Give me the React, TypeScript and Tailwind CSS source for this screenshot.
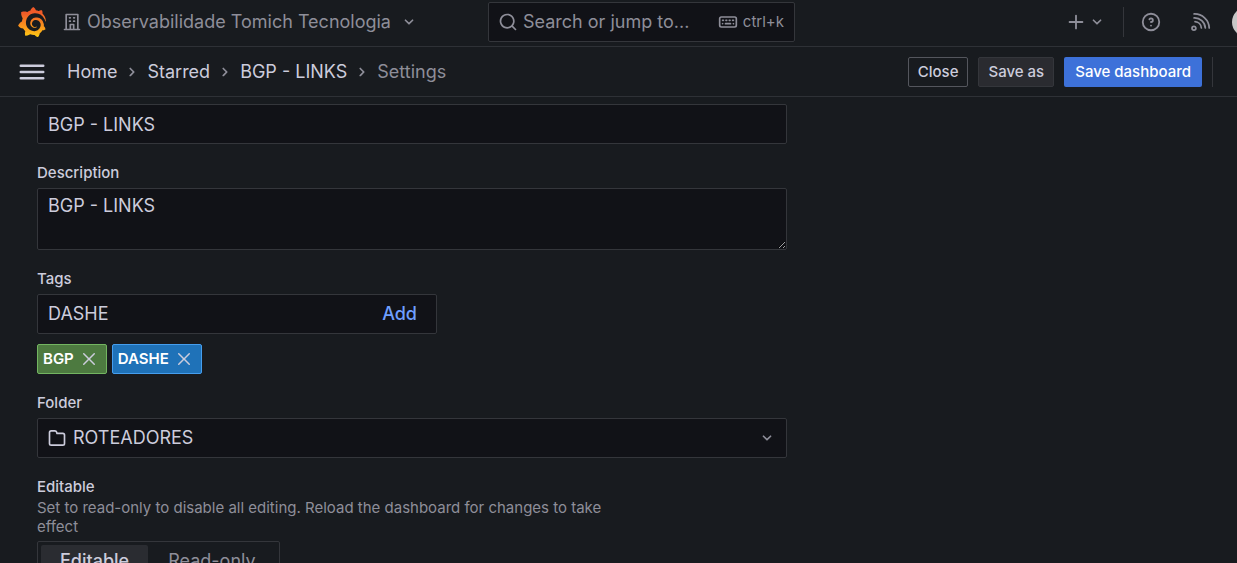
import type { ReactNode } from "react";
import { SiGrafana } from "react-icons/si";

const paths = {
  building:
    "M14,8h1a1,1,0,0,0,0-2H14a1,1,0,0,0,0,2Zm0,4h1a1,1,0,0,0,0-2H14a1,1,0,0,0,0,2ZM9,8h1a1,1,0,0,0,0-2H9A1,1,0,0,0,9,8Zm0,4h1a1,1,0,0,0,0-2H9a1,1,0,0,0,0,2Zm12,8H20V3a1,1,0,0,0-1-1H5A1,1,0,0,0,4,3V20H3a1,1,0,0,0,0,2H21a1,1,0,0,0,0-2Zm-8,0H11V16h2Zm5,0H15V15a1,1,0,0,0-1-1H10a1,1,0,0,0-1,1v5H6V4H18Z",
  search:
    "M21.71,20.29,18,16.61A9,9,0,1,0,16.61,18l3.68,3.68a1,1,0,0,0,1.42,0A1,1,0,0,0,21.71,20.29ZM11,18a7,7,0,1,1,7-7A7,7,0,0,1,11,18Z",
  angleDown:
    "M17,9.17a1,1,0,0,0-1.41,0L12,12.71,8.46,9.17a1,1,0,0,0-1.41,0,1,1,0,0,0,0,1.42l4.24,4.24a1,1,0,0,0,1.42,0L17,10.59A1,1,0,0,0,17,9.17Z",
  angleRight:
    "M14.83,11.29,10.59,7.05a1,1,0,0,0-1.42,0,1,1,0,0,0,0,1.41L12.71,12,9.17,15.54a1,1,0,0,0,0,1.41,1,1,0,0,0,.71.29,1,1,0,0,0,.71-.29l4.24-4.24A1,1,0,0,0,14.83,11.29Z",
  plus: "M19,11H13V5a1,1,0,0,0-2,0v6H5a1,1,0,0,0,0,2h6v6a1,1,0,0,0,2,0V13h6a1,1,0,0,0,0-2Z",
  question:
    "M11.29,15.29a1.58,1.58,0,0,0-.12.15.76.76,0,0,0-.09.18.64.64,0,0,0-.06.18,1.36,1.36,0,0,0,0,.2.84.84,0,0,0,.08.38.9.9,0,0,0,.54.54.94.94,0,0,0,.76,0,.9.9,0,0,0,.54-.54A1,1,0,0,0,13,16a1,1,0,0,0-.29-.71A1,1,0,0,0,11.29,15.29ZM12,2A10,10,0,1,0,22,12,10,10,0,0,0,12,2Zm0,18a8,8,0,1,1,8-8A8,8,0,0,1,12,20ZM12,7A3,3,0,0,0,9.4,8.5a1,1,0,1,0,1.73,1A1,1,0,0,1,12,9a1,1,0,0,1,0,2,1,1,0,1,0,0,2,3,3,0,0,0,0-6Z",
  times:
    "M13.41,12l6.3-6.29a1,1,0,1,0-1.42-1.42L12,10.59,5.71,4.29A1,1,0,0,0,4.29,5.71L10.59,12l-6.3,6.29a1,1,0,0,0,0,1.42,1,1,0,0,0,1.42,0L12,13.41l6.29,6.3a1,1,0,0,0,1.42,0,1,1,0,0,0,0-1.42Z",
  folder:
    "M19,5.5H12.72l-.32-1a3,3,0,0,0-2.84-2H5a3,3,0,0,0-3,3v13a3,3,0,0,0,3,3H19a3,3,0,0,0,3-3V8.5A3,3,0,0,0,19,5.5Zm1,13a1,1,0,0,1-1,1H5a1,1,0,0,1-1-1V5.5a1,1,0,0,1,1-1H9.56a1,1,0,0,1,.95.68l.54,1.64A1,1,0,0,0,12,7.5h7a1,1,0,0,1,1,1Z",
  bars: "M3,8H21a1,1,0,0,0,0-2H3A1,1,0,0,0,3,8Zm18,8H3a1,1,0,0,0,0,2H21a1,1,0,0,0,0-2Zm0-5H3a1,1,0,0,0,0,2H21a1,1,0,0,0,0-2Z",
  keyboard:
    "M6.21,13.29a.93.93,0,0,0-.33-.21,1,1,0,0,0-.76,0,.9.9,0,0,0-.54.54,1,1,0,1,0,1.84,0A1,1,0,0,0,6.21,13.29ZM13.5,11h1a1,1,0,0,0,0-2h-1a1,1,0,0,0,0,2Zm-4,0h1a1,1,0,0,0,0-2h-1a1,1,0,0,0,0,2Zm-3-2h-1a1,1,0,0,0,0,2h1a1,1,0,0,0,0-2ZM20,5H4A3,3,0,0,0,1,8v8a3,3,0,0,0,3,3H20a3,3,0,0,0,3-3V8A3,3,0,0,0,20,5Zm1,11a1,1,0,0,1-1,1H4a1,1,0,0,1-1-1V8A1,1,0,0,1,4,7H20a1,1,0,0,1,1,1Zm-6-3H9a1,1,0,0,0,0,2h6a1,1,0,0,0,0-2Zm3.5-4h-1a1,1,0,0,0,0,2h1a1,1,0,0,0,0-2Zm.71,4.29a1,1,0,0,0-.33-.21,1,1,0,0,0-.76,0,.93.93,0,0,0-.33.21,1,1,0,0,0-.21.33A1,1,0,1,0,19.5,14a.84.84,0,0,0-.08-.38A1,1,0,0,0,19.21,13.29Z",
};

function Icon({ name, className }: { name: keyof typeof paths; className: string }) {
  return (
    <svg viewBox="0 0 24 24" fill="currentColor" aria-hidden="true" className={`shrink-0 ${className}`}>
      <path d={paths[name]} />
    </svg>
  );
}

function RssIcon() {
  return (
    <svg viewBox="0 0 24 24" fill="none" stroke="currentColor" strokeWidth="1.9" strokeLinecap="round" aria-hidden="true" className="size-[22px] shrink-0">
      <circle cx="4.3" cy="18.8" r="2.1" />
      <path d="M5.5 11.6A7.4 7.4 0 0 1 12.4 18.5M4.5 7.5A11.7 11.7 0 0 1 16.7 18.5M4.5 3.2A16 16 0 0 1 21 18.5" />
    </svg>
  );
}

function Logo() {
  return (
    <a href="#home" aria-label="Grafana" className="shrink-0">
      <svg width="0" height="0" className="absolute" aria-hidden="true">
        <defs>
          <linearGradient id="flame" x1="0" y1="1" x2="0" y2="0">
            <stop offset="0" stopColor="#fccc14" />
            <stop offset="0.25" stopColor="#fba31a" />
            <stop offset="0.8" stopColor="#f05a28" />
          </linearGradient>
        </defs>
      </svg>
      <SiGrafana className="size-[30px] fill-[url(#flame)]" />
    </a>
  );
}

function Crumb({ children }: { children: ReactNode }) {
  return (
    <li className="flex items-center">
      <a href="#crumb">{children}</a>
      <Icon name="angleRight" className="mx-[5px] size-5 text-[#8e8e99]" />
    </li>
  );
}

const box = "rounded-[2px] border border-[#34363b] bg-[#111217] text-[#ccccdc]";
const label = "text-[15px] leading-5 font-medium";

export default function App() {
  return (
    <div className="h-screen overflow-hidden bg-[#181b1f] font-['Inter',sans-serif] text-[18px] leading-6 text-[#ccccdc]">
      <header className="flex h-[47px] items-center border-b border-[#2e3136] pb-[3px] pl-[17px] text-[#8e8e99]">
        <div className="flex flex-[471] items-center">
          <Logo />
          <button type="button" className="ml-[15px] flex items-center">
            <Icon name="building" className="size-5" />
            <span className="ml-[5px]">Observabilidade Tomich Tecnologia</span>
            <Icon name="angleDown" className="ml-2 size-5" />
          </button>
        </div>
        <button type="button" className="flex h-10 w-[307px] shrink-0 items-center rounded-[2px] border border-[#34363b] bg-[#111217] pr-[10px] pl-[9px]">
          <Icon name="search" className="size-5" />
          <span className="ml-[5px] flex-1 text-left">Search or jump to...</span>
          <Icon name="keyboard" className="size-5" />
          <span className="ml-[5px] text-[15px]">ctrl+k</span>
        </button>
        <div className="flex flex-[442] items-center justify-end">
          <button type="button" aria-label="New" className="flex items-center">
            <Icon name="plus" className="size-[22px]" />
            <Icon name="angleDown" className="size-5" />
          </button>
          <div className="ml-4 h-[30px] w-px bg-[#34363b]" />
          <button type="button" aria-label="Help" className="ml-4">
            <Icon name="question" className="size-[22px]" />
          </button>
          <button type="button" aria-label="News" className="ml-7">
            <RssIcon />
          </button>
          <div className="ml-5 w-[5px] overflow-hidden">
            <button type="button" aria-label="Profile" className="block size-[30px] rounded-full bg-[#c7c7c7]" />
          </div>
        </div>
      </header>

      <div className="flex h-[50px] items-center border-b border-[#2e3136] pr-6 pl-[17px]">
        <button type="button" aria-label="Open menu">
          <Icon name="bars" className="size-[30px]" />
        </button>
        <nav aria-label="Breadcrumbs" className="ml-5 flex-1">
          <ol className="flex items-center">
            <Crumb>Home</Crumb>
            <Crumb>Starred</Crumb>
            <Crumb>BGP - LINKS</Crumb>
            <li className="text-[#8e8e99]">Settings</li>
          </ol>
        </nav>
        <div className="flex items-center gap-[10px] text-[15px] font-medium">
          <button type="button" className="h-[30px] rounded-[2px] border border-[#54565d] px-[9px] leading-5">Close</button>
          <button type="button" className="h-[30px] rounded-[2px] border border-[#34363b] bg-[#2a2b30] px-[9px] leading-5">Save as</button>
          <button type="button" className="h-[30px] rounded-[2px] bg-[#3d71d9] px-[11px] leading-5 text-white">Save dashboard</button>
          <div className="h-[30px] w-px bg-[#34363b]" />
        </div>
      </div>

      <main className="max-w-[787px] pt-[7px] pl-[37px]">
        <input aria-label="Title" defaultValue="BGP - LINKS" className={`${box} block h-10 w-full px-[10px]`} />

        <label htmlFor="description" className={`${label} mt-[19px] block`}>Description</label>
        <textarea id="description" defaultValue="BGP - LINKS" className={`${box} mt-[5px] block h-[62px] w-full resize px-[10px] py-[5px]`} />

        <label htmlFor="tags" className={`${label} mt-[19px] block`}>Tags</label>
        <div className={`${box} mt-[5px] flex h-10 w-[400px] items-center pr-[19px] pl-[10px]`}>
          <input id="tags" defaultValue="DASHE" className="min-w-0 flex-1 bg-transparent" />
          <button type="button" className="font-medium text-[#6e9fff]">Add</button>
        </div>
        <ul className="mt-[10px] flex gap-[5px] text-[15px] leading-5 font-semibold text-white">
          <li className="flex h-[30px] items-center rounded-[2px] border border-[#73b561] bg-[#4d7a40] pr-2 pl-[5px]">
            BGP
            <button type="button" aria-label="Remove tag BGP" className="ml-[6px] text-[#ccccdc]">
              <Icon name="times" className="size-[18px]" />
            </button>
          </li>
          <li className="flex h-[30px] items-center rounded-[2px] border border-[#459eee] bg-[#1f72b8] pr-2 pl-[5px]">
            DASHE
            <button type="button" aria-label="Remove tag DASHE" className="ml-[6px] text-[#ccccdc]">
              <Icon name="times" className="size-[18px]" />
            </button>
          </li>
        </ul>

        <div id="folder-label" className={`${label} mt-[19px]`}>Folder</div>
        <button type="button" aria-labelledby="folder-label folder-value" className={`${box} mt-[5px] flex h-10 w-full items-center px-[9px]`}>
          <Icon name="folder" className="size-5" />
          <span id="folder-value" className="ml-[6px] flex-1 text-left">ROTEADORES</span>
          <Icon name="angleDown" className="size-5 text-[#8e8e99]" />
        </button>

        <fieldset className="mt-[19px]">
          <legend className={label}>Editable</legend>
          <p className="mt-px max-w-[600px] text-[15px] leading-[19px] text-[#8e8e99]">
            Set to read-only to disable all editing. Reload the dashboard for changes to take effect
          </p>
          <div className="mt-[5px] inline-flex h-10 rounded-[2px] border border-[#34363b] p-[3px]">
            <label className="flex items-center rounded-[2px] bg-[#2a2c31] px-[19px] font-medium">
              <input type="radio" name="editable" defaultChecked className="sr-only" />
              Editable
            </label>
            <label className="flex items-center px-5 text-[#8e8e99]">
              <input type="radio" name="editable" className="sr-only" />
              Read-only
            </label>
          </div>
        </fieldset>
      </main>
    </div>
  );
}
